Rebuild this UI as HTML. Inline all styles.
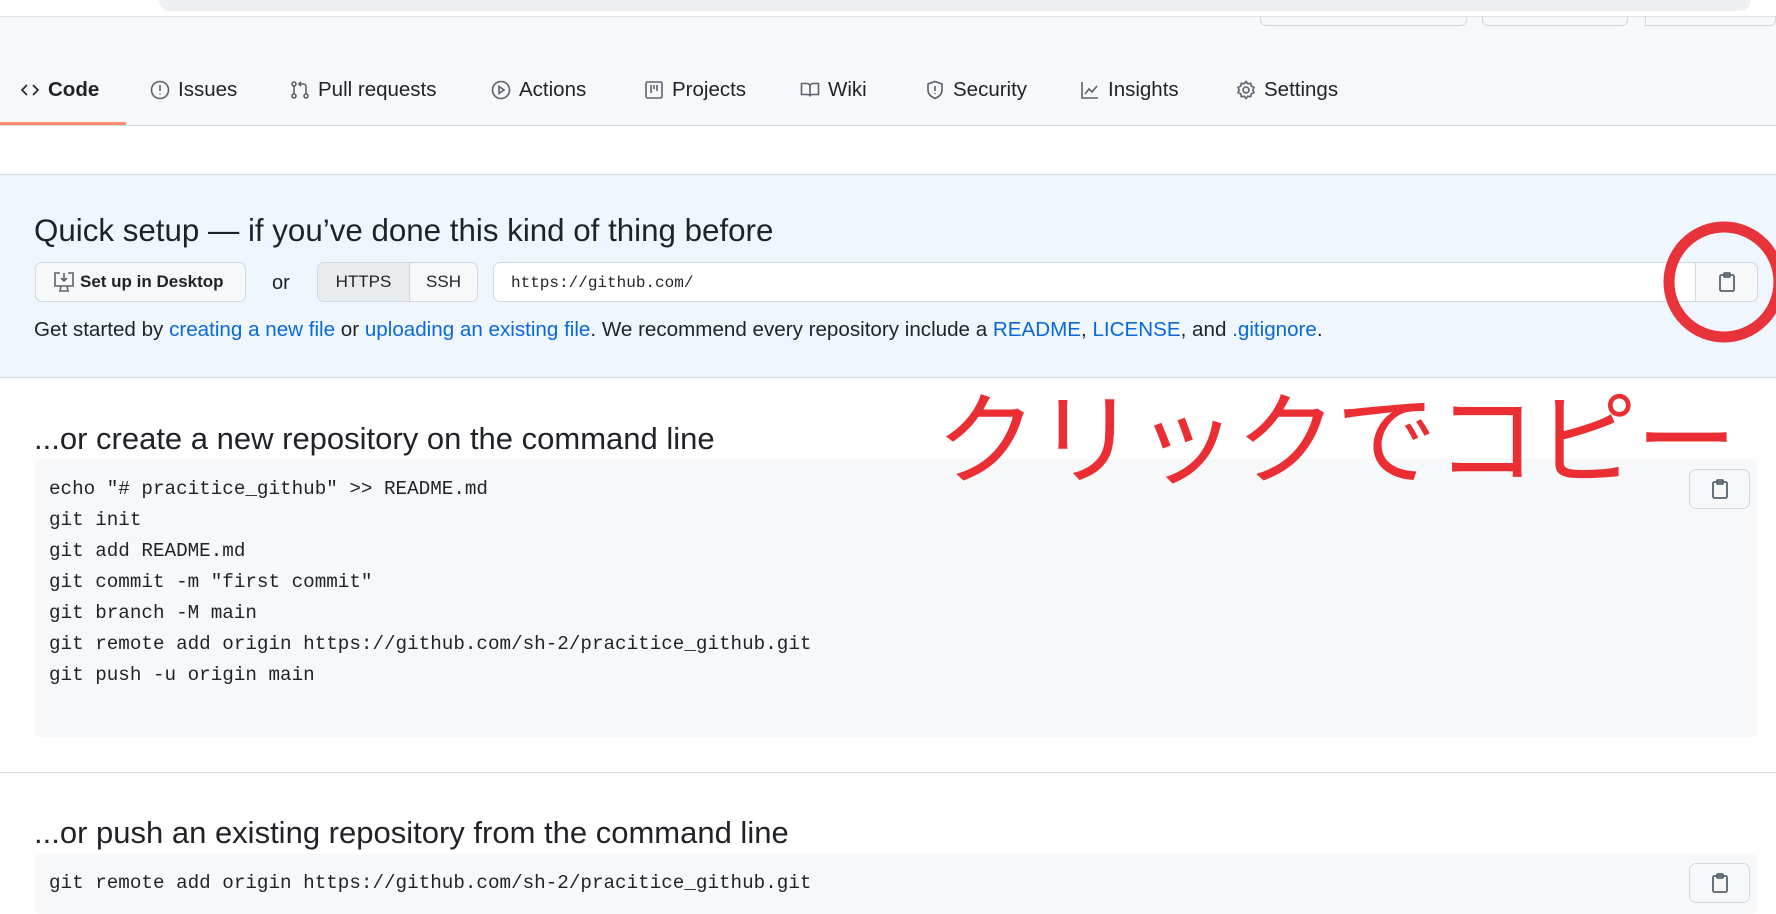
<!DOCTYPE html>
<html><head><meta charset="utf-8"><style>
*{box-sizing:border-box;margin:0;padding:0}
body{width:1776px;height:898px;overflow:hidden;background:#fff;font-family:"Liberation Sans",sans-serif;color:#1f2328;position:relative}
.abs{position:absolute}
.nav span{position:absolute;top:78px;font-size:20.5px;color:#1f2328;display:flex;align-items:center;gap:8px;white-space:nowrap}
.nav svg{width:20px;height:20px;fill:none;stroke:#59636e;stroke-width:1.6}
.mono{font-family:"Liberation Mono",monospace}
.code div{height:31px;font-size:19.25px;line-height:31px}
a{color:#0969da;text-decoration:none}
.copy{position:absolute;border:1px solid #d1d9e0;border-radius:7px;background:#f6f8fa;display:flex;align-items:center;justify-content:center}
.copy svg{width:18px;height:20px;fill:none;stroke:#59636e;stroke-width:1.8}
</style></head><body>
<div class="abs" style="left:159px;top:0;width:1592px;height:11px;background:#eef0f2;border-radius:0 0 14px 14px"></div>
<div class="abs" style="left:0;top:16px;width:1776px;height:110px;background:#f6f8fa;border-top:1px solid #dfe2e5"></div>
<div class="abs" style="left:1260px;top:16px;width:207px;height:10px;border:1px solid #d1d9e0;border-top:0;border-radius:0 0 6px 6px"></div>
<div class="abs" style="left:1482px;top:16px;width:146px;height:10px;border:1px solid #d1d9e0;border-top:0;border-radius:0 0 6px 6px"></div>
<div class="abs" style="left:1645px;top:16px;width:131px;height:10px;border:1px solid #d1d9e0;border-top:0;border-radius:0 0 6px 0"></div>
<div class="nav">
<span style="left:20px;font-weight:600"><svg viewBox="0 0 20 20" style="stroke:#1f2328"><path d="M7 5 2 10l5 5M13 5l5 5-5 5"/></svg>Code</span>
<span style="left:150px"><svg viewBox="0 0 20 20"><circle cx="10" cy="10" r="8.5"/><path d="M10 5v6M10 13.5v1"/></svg>Issues</span>
<span style="left:290px"><svg viewBox="0 0 20 20"><circle cx="4" cy="4" r="2"/><circle cx="4" cy="16" r="2"/><circle cx="16" cy="16" r="2"/><path d="M4 6v8M16 14V7q0-3-3-3H9m2-2-2 2 2 2"/></svg>Pull requests</span>
<span style="left:491px"><svg viewBox="0 0 20 20"><circle cx="10" cy="10" r="8.5"/><path d="M8 6.5v7l5-3.5z"/></svg>Actions</span>
<span style="left:644px"><svg viewBox="0 0 20 20"><rect x="2" y="2" width="16" height="16" rx="1.5"/><path d="M7 5v8M10 5v4M13 5v6"/></svg>Projects</span>
<span style="left:800px"><svg viewBox="0 0 20 20"><path d="M1.5 3.5h5q3.5 0 3.5 3v10q0-2-3-2h-5.5zM18.5 3.5h-5q-3.5 0-3.5 3v10q0-2 3-2h5.5z"/></svg>Wiki</span>
<span style="left:925px"><svg viewBox="0 0 20 20"><path d="M10 1.5 17 4v6q0 5.5-7 8.5-7-3-7-8.5V4z"/><path d="M10 6v5M10 13v1"/></svg>Security</span>
<span style="left:1080px"><svg viewBox="0 0 20 20"><path d="M2 2v16h16M5 14l4-5 3 3 5-6"/></svg>Insights</span>
<span style="left:1236px"><svg viewBox="0 0 20 20"><circle cx="10" cy="10" r="3"/><path d="M10 1.5l1.8 2.3 2.9-.5.6 2.9 2.7 1.2-1.2 2.6 1.2 2.6-2.7 1.2-.6 2.9-2.9-.5L10 18.5l-1.8-2.3-2.9.5-.6-2.9-2.7-1.2L3.2 10 2 7.4l2.7-1.2.6-2.9 2.9.5z"/></svg>Settings</span>
</div>
<div class="abs" style="left:0;top:122px;width:126px;height:3px;background:#fd8c73"></div>
<div class="abs" style="left:0;top:125px;width:1776px;height:1px;background:#d1d9e0"></div>

<div class="abs" style="left:0;top:174px;width:1776px;height:204px;background:#eff6fd;border-top:1px solid #d1d9e0;border-bottom:1px solid #d1d9e0"></div>
<div class="abs" style="left:34px;top:213px;font-size:31.3px;font-weight:500;white-space:nowrap">Quick setup — if you’ve done this kind of thing before</div>
<div class="abs" style="left:35px;top:262px;width:211px;height:40px;border:1px solid #d1d9e0;border-radius:7px;background:#f6f8fa;font-size:17px;font-weight:600;display:flex;align-items:center;padding-left:16px;gap:4px;white-space:nowrap"><svg width="24" height="22" viewBox="0 0 24 22" fill="none" stroke="#59636e" stroke-width="1.6"><path d="M8 2H3v13h18V2h-5M12 2v8m-3-3 3 3 3-3M9 15l-1 5h8l-1-5"/></svg>Set up in Desktop</div>
<div class="abs" style="left:272px;top:272px;font-size:20px">or</div>
<div class="abs" style="left:317px;top:262px;width:161px;height:40px;border:1px solid #d1d9e0;border-radius:7px;background:#f6f8fa;overflow:hidden;font-size:17px;display:flex">
<div style="width:92px;background:#e9ecef;border-right:1px solid #d1d9e0;display:flex;align-items:center;justify-content:center">HTTPS</div>
<div style="flex:1;display:flex;align-items:center;justify-content:center">SSH</div></div>
<div class="abs mono" style="left:493px;top:262px;width:1265px;height:40px;border:1px solid #d1d9e0;border-radius:7px;background:#fff;font-size:16px;padding:11px 17px;color:#1f2328">https://github.com/</div>
<div class="copy" style="left:1695px;top:262px;width:63px;height:40px;border-radius:0 7px 7px 0"><svg viewBox="0 0 18 20"><rect x="2" y="3" width="14" height="16" rx="1.5"/><rect x="6" y="1" width="6" height="4" rx="1"/></svg></div>
<div class="abs" style="left:34px;top:318px;font-size:20.6px;white-space:nowrap">Get started by <a>creating a new file</a> or <a>uploading an existing file</a>. We recommend every repository include a <a>README</a>, <a>LICENSE</a>, and <a>.gitignore</a>.</div>
<svg class="abs" style="left:1650px;top:210px" width="126" height="146"><circle cx="74" cy="72" r="55" fill="none" stroke="#e8333a" stroke-width="11"/></svg>

<div class="abs" style="left:34px;top:421px;font-size:31px;font-weight:500;white-space:nowrap">...or create a new repository on the command line</div>
<div class="abs" style="left:34px;top:459px;width:1724px;height:278px;background:#f6f8fa;border-radius:7px"></div>
<div class="abs mono code" style="left:49px;top:474px">
<div>echo "# pracitice_github" &gt;&gt; README.md</div><div>git init</div><div>git add README.md</div><div>git commit -m "first commit"</div><div>git branch -M main</div><div>git remote add origin https://github.com/sh-2/pracitice_github.git</div><div>git push -u origin main</div></div>
<div class="copy" style="left:1689px;top:469px;width:61px;height:40px"><svg viewBox="0 0 18 20"><rect x="2" y="3" width="14" height="16" rx="1.5"/><rect x="6" y="1" width="6" height="4" rx="1"/></svg></div>
<div class="abs" style="left:0;top:772px;width:1776px;height:1px;background:#d1d9e0"></div>
<div class="abs" style="left:34px;top:815px;font-size:31px;font-weight:500;white-space:nowrap">...or push an existing repository from the command line</div>
<div class="abs" style="left:34px;top:854px;width:1724px;height:60px;background:#f6f8fa;border-radius:7px"></div>
<div class="abs mono code" style="left:49px;top:868px"><div>git remote add origin https://github.com/sh-2/pracitice_github.git</div></div>
<div class="copy" style="left:1689px;top:863px;width:61px;height:40px"><svg viewBox="0 0 18 20"><rect x="2" y="3" width="14" height="16" rx="1.5"/><rect x="6" y="1" width="6" height="4" rx="1"/></svg></div>

<div class="abs" style="left:936px;top:378px;font-size:101px;color:#ea2e33;font-family:'Noto Sans CJK JP',sans-serif;white-space:nowrap;line-height:110px;letter-spacing:-1px">クリックでコピー</div>
</body></html>
